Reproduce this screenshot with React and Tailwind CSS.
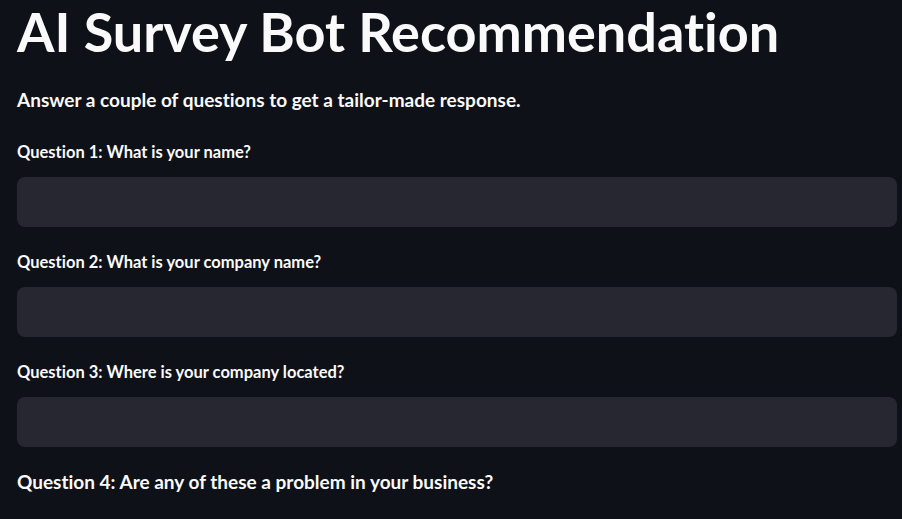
export default function App() {
  const questions = [
    'Question 1: What is your name?',
    'Question 2: What is your company name?',
    'Question 3: Where is your company located?',
  ];

  return (
    <div className="min-h-screen bg-[#0e1117] text-[#fafafa] font-['Lato',sans-serif] [font-variant-ligatures:none] pl-[17px] pr-[5px]">
      <h1 className="font-bold text-[54px] leading-[64px]">AI Survey Bot Recommendation</h1>
      <p className="font-bold text-[19px] leading-[28px] mt-[22px]">
        Answer a couple of questions to get a tailor-made response.
      </p>
      <div className="mt-[26px] flex flex-col gap-[23px]">
        {questions.map((q) => (
          <label key={q} className="flex flex-col">
            <span className="font-bold text-[16.5px] leading-[24px]">{q}</span>
            <input className="mt-[13px] h-[50px] w-full rounded-[8px] bg-[#262730] px-3 text-[16px] outline-none" />
          </label>
        ))}
      </div>
      <p className="font-bold text-[19px] leading-[28px] mt-[21px]">
        Question 4: Are any of these a problem in your business?
      </p>
    </div>
  );
}
